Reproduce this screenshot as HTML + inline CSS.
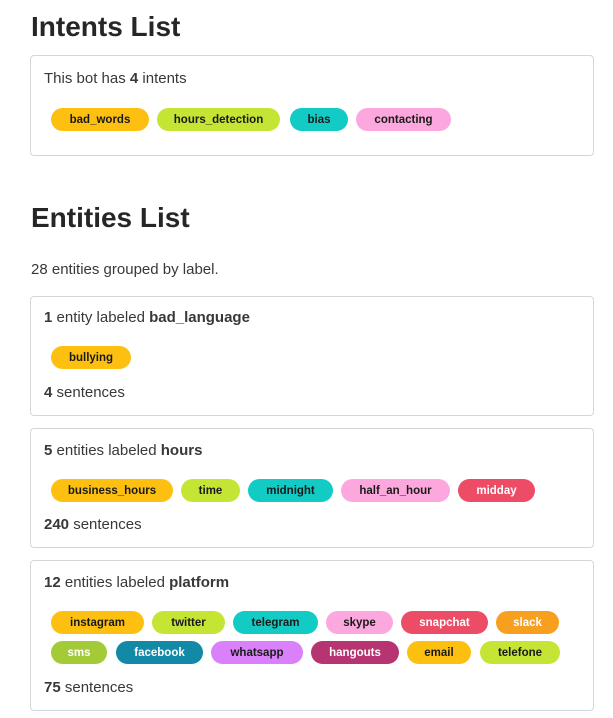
<!DOCTYPE html>
<html><head><style>
body{margin:0;width:613px;height:718px;background:#fff;font-family:"Liberation Sans",sans-serif;color:#2d2d2d;position:relative;overflow:hidden}
h1{position:absolute;margin:0;left:31px;font-size:28px;font-weight:bold;line-height:34px;color:#262626}
.card{position:absolute;left:30px;width:564px;border:1px solid #d4d6d8;border-radius:4px;box-sizing:border-box}
.t{position:absolute;left:44px;font-size:15px;line-height:20px;color:#383838}
.p{position:absolute;height:23px;border-radius:12px;font-size:11.5px;font-weight:bold;display:flex;align-items:center;justify-content:center;color:#1a1a1a;padding-top:1px;box-sizing:border-box}
.w{color:#fff}
.y{background:#fdc011}.l{background:#c5e535}.c{background:#12cbc4}.k{background:#fda7df}.r{background:#ed4c67}.o{background:#f79f1f}.g{background:#a3cb38}.b{background:#1289a7}.u{background:#d980fa}.m{background:#b53471}
</style></head><body>
<h1 style="top:10px">Intents List</h1>
<div class="card" style="top:55px;height:101px"></div>
<div class="t" style="top:69px">This bot has <b>4</b> intents</div>
<div class="p y" style="top:108px;left:51px;width:98px">bad_words</div>
<div class="p l" style="top:108px;left:157px;width:123px">hours_detection</div>
<div class="p c" style="top:108px;left:290px;width:58px">bias</div>
<div class="p k" style="top:108px;left:356px;width:95px">contacting</div>

<h1 style="top:201px">Entities List</h1>
<div class="t" style="top:260px;left:31px">28 entities grouped by label.</div>

<div class="card" style="top:296px;height:120px"></div>
<div class="t" style="top:308px"><b>1</b> entity labeled <b>bad_language</b></div>
<div class="p y" style="top:346px;left:51px;width:80px">bullying</div>
<div class="t" style="top:383px"><b>4</b> sentences</div>

<div class="card" style="top:428px;height:120px"></div>
<div class="t" style="top:441px"><b>5</b> entities labeled <b>hours</b></div>
<div class="p y" style="top:479px;left:51px;width:122px">business_hours</div>
<div class="p l" style="top:479px;left:181px;width:59px">time</div>
<div class="p c" style="top:479px;left:248px;width:85px">midnight</div>
<div class="p k" style="top:479px;left:341px;width:109px">half_an_hour</div>
<div class="p r w" style="top:479px;left:458px;width:77px">midday</div>
<div class="t" style="top:515px"><b>240</b> sentences</div>

<div class="card" style="top:560px;height:151px"></div>
<div class="t" style="top:573px"><b>12</b> entities labeled <b>platform</b></div>
<div class="p y" style="top:611px;left:51px;width:93px">instagram</div>
<div class="p l" style="top:611px;left:152px;width:73px">twitter</div>
<div class="p c" style="top:611px;left:233px;width:85px">telegram</div>
<div class="p k" style="top:611px;left:326px;width:67px">skype</div>
<div class="p r w" style="top:611px;left:401px;width:87px">snapchat</div>
<div class="p o w" style="top:611px;left:496px;width:63px">slack</div>
<div class="p g w" style="top:641px;left:51px;width:56px">sms</div>
<div class="p b w" style="top:641px;left:116px;width:87px">facebook</div>
<div class="p u" style="top:641px;left:211px;width:92px">whatsapp</div>
<div class="p m w" style="top:641px;left:311px;width:88px">hangouts</div>
<div class="p y" style="top:641px;left:407px;width:64px">email</div>
<div class="p l" style="top:641px;left:480px;width:80px">telefone</div>
<div class="t" style="top:678px"><b>75</b> sentences</div>
</body></html>
